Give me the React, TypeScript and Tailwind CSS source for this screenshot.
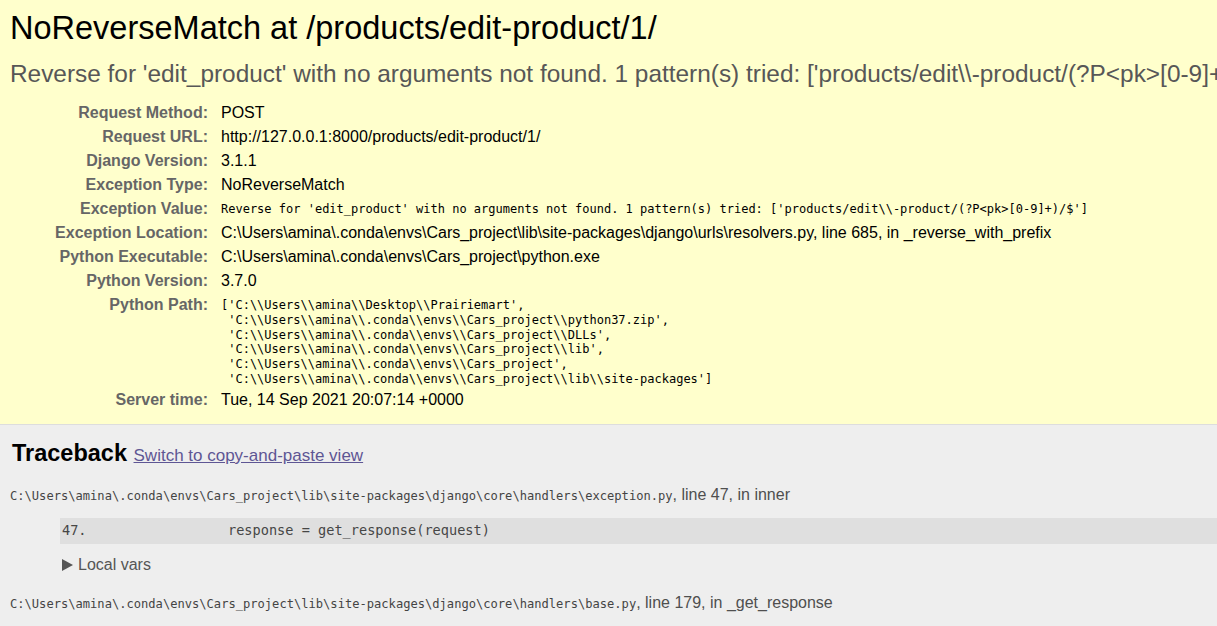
const sans = "font-['Liberation_Sans',Arial,sans-serif]"
const mono = "font-['DejaVu_Sans_Mono',monospace]"

const exceptionValue = String.raw`Reverse for 'edit_product' with no arguments not found. 1 pattern(s) tried: ['products/edit\\-product/(?P<pk>[0-9]+)/$']`

const pythonPath = [
  String.raw`['C:\\Users\\amina\\Desktop\\Prairiemart',`,
  String.raw` 'C:\\Users\\amina\\.conda\\envs\\Cars_project\\python37.zip',`,
  String.raw` 'C:\\Users\\amina\\.conda\\envs\\Cars_project\\DLLs',`,
  String.raw` 'C:\\Users\\amina\\.conda\\envs\\Cars_project\\lib',`,
  String.raw` 'C:\\Users\\amina\\.conda\\envs\\Cars_project',`,
  String.raw` 'C:\\Users\\amina\\.conda\\envs\\Cars_project\\lib\\site-packages']`,
]

const meta: [string, string][] = [
  ['Request Method:', 'POST'],
  ['Request URL:', 'http://127.0.0.1:8000/products/edit-product/1/'],
  ['Django Version:', '3.1.1'],
  ['Exception Type:', 'NoReverseMatch'],
  ['Exception Value:', ''],
  ['Exception Location:', String.raw`C:\Users\amina\.conda\envs\Cars_project\lib\site-packages\django\urls\resolvers.py, line 685, in _reverse_with_prefix`],
  ['Python Executable:', String.raw`C:\Users\amina\.conda\envs\Cars_project\python.exe`],
  ['Python Version:', '3.7.0'],
  ['Python Path:', ''],
  ['Server time:', 'Tue, 14 Sep 2021 20:07:14 +0000'],
]

const frames = [
  {
    file: String.raw`C:\Users\amina\.conda\envs\Cars_project\lib\site-packages\django\core\handlers\exception.py`,
    where: ', line 47, in inner',
    lineno: '47.',
    code: 'response = get_response(request)',
  },
  {
    file: String.raw`C:\Users\amina\.conda\envs\Cars_project\lib\site-packages\django\core\handlers\base.py`,
    where: ', line 179, in _get_response',
    lineno: '179.',
    code: 'response = wrapped_callback(request, *callback_args, **callback_kwargs)',
  },
]

function MetaValue({ label, value }: { label: string; value: string }) {
  if (label === 'Exception Value:') {
    return <div className={`${mono} text-[12px] leading-[20px] whitespace-pre text-black`}>{exceptionValue}</div>
  }
  if (label === 'Python Path:') {
    return (
      <div className={`${mono} text-[12px] leading-[14.8px] whitespace-pre text-black pt-[3px] pb-[1px]`}>
        {pythonPath.map((line) => (
          <div key={line}>{line}</div>
        ))}
      </div>
    )
  }
  return <div className="text-[16px] leading-[20px] text-black whitespace-nowrap">{value}</div>
}

export default function App() {
  return (
    <div className={`${sans} min-h-[626px] w-full overflow-hidden bg-[#eeeeee]`}>
      <div className="bg-[#ffffcc] border-b border-[#dddddd] pt-[10px] pb-[12px] pl-[10px]">
        <h1 className="text-[32.5px] leading-[36px] font-normal text-black whitespace-nowrap">
          NoReverseMatch at /products/edit-product/1/
        </h1>
        <pre className={`${sans} text-[24.4px] leading-[28px] text-[#575757] whitespace-nowrap mt-[14px] mb-[13px]`}>
          {exceptionValue}
        </pre>
        <div className="grid grid-cols-[198px_1fr] gap-x-[13px]">
          {meta.map(([label, value]) => (
            <div key={label} className="contents">
              <div className="text-right font-bold text-[16px] leading-[20px] text-[#666666] py-[2px] whitespace-nowrap">
                {label}
              </div>
              <div className={label === 'Python Path:' ? 'pt-[2px]' : 'py-[2px]'}>
                <MetaValue label={label} value={value} />
              </div>
            </div>
          ))}
        </div>
      </div>

      <div className="pt-[14px] pl-[10px]">
        <h2 className="text-[23.5px] leading-[28px] font-bold text-black pl-[2px] whitespace-nowrap">
          Traceback{' '}
          <span className="text-[17px] font-normal">
            <a href="#" className="text-[#5e5694] underline">
              Switch to copy-and-paste view
            </a>
          </span>
        </h2>
        <ul className="mt-[15px] text-[#4f4f4f]">
          {frames.map((f) => (
            <li key={f.file} className="pb-[18px]">
              <div className="leading-[19px] whitespace-nowrap">
                <code className={`${mono} text-[12.1px] text-[#444444]`}>{f.file}</code>
                <span className="text-[16px]">{f.where}</span>
              </div>
              <div className="pt-[12.5px] pb-[11px]">
                <div className={`${mono} ml-[50px] bg-[#dfdfdf] text-[#464646] text-[13.6px] leading-[19.5px] py-[3px] pl-[2px] whitespace-pre flex`}>
                  <span className="w-[166px] shrink-0">{f.lineno}</span>
                  <span>{f.code}</span>
                </div>
              </div>
              <div className="ml-[52px] text-[16px] leading-[20px] text-[#555555] flex items-center gap-[5px]">
                <svg width="11" height="12" viewBox="0 0 11 12" className="shrink-0">
                  <polygon points="0,0 11,6 0,12" fill="#555555" />
                </svg>
                <span>Local vars</span>
              </div>
            </li>
          ))}
        </ul>
      </div>
    </div>
  )
}
